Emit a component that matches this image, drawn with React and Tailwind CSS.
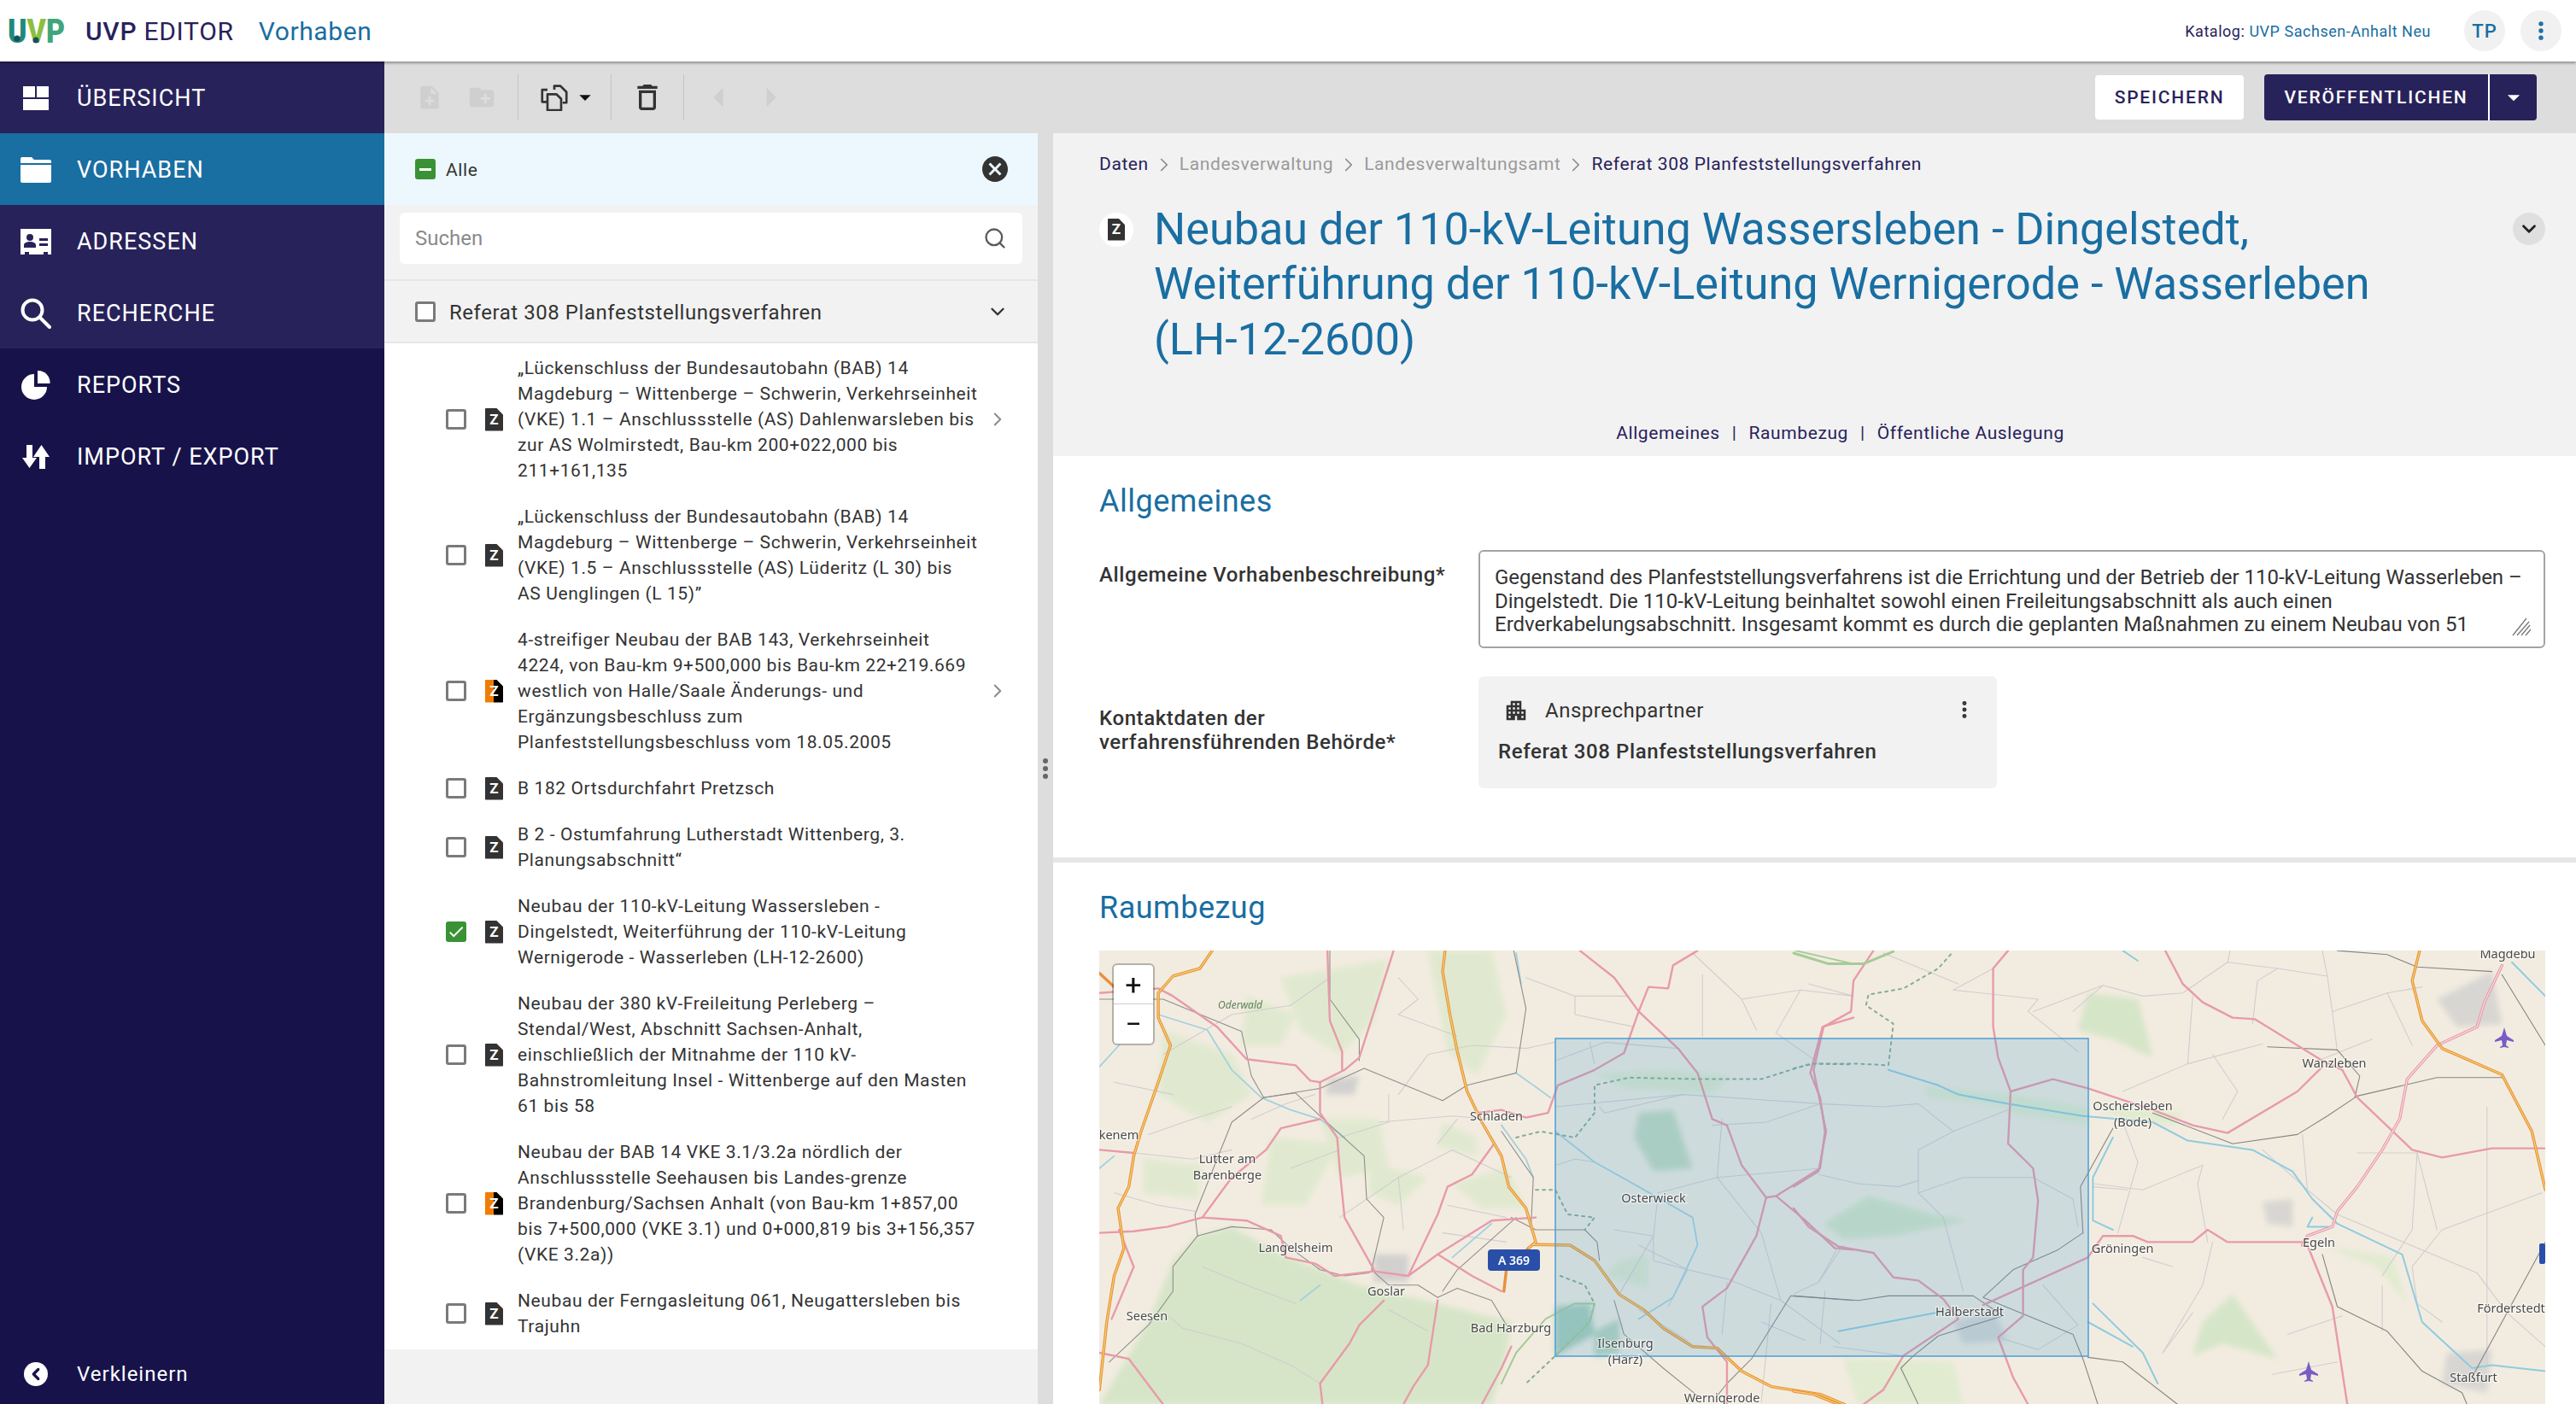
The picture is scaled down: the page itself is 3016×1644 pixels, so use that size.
import { ChevronRight, ChevronDown, Search, EllipsisVertical } from 'lucide-react';
import { MdCancel, MdApartment, MdDeleteOutline, MdArrowDropDown, MdArrowLeft, MdArrowRight, MdNoteAdd, MdCreateNewFolder, MdCheck } from 'react-icons/md';

const FONT = "font-['Roboto','Liberation_Sans',sans-serif]";

const NAV = [
  { label: 'ÜBERSICHT', icon: DashIcon },
  { label: 'VORHABEN', icon: FolderIcon, active: true },
  { label: 'ADRESSEN', icon: CardIcon },
  { label: 'RECHERCHE', icon: SearchIcon },
];
const NAV_LOWER = [
  { label: 'REPORTS', icon: PieIcon },
  { label: 'IMPORT / EXPORT', icon: SwapIcon },
];

const TREE = [
  { lines: ['„Lückenschluss der Bundesautobahn (BAB) 14', 'Magdeburg – Wittenberge – Schwerin, Verkehrseinheit', '(VKE) 1.1 – Anschlussstelle (AS) Dahlenwarsleben bis', 'zur AS Wolmirstedt, Bau-km 200+022,000 bis', '211+161,135'], chevron: true },
  { lines: ['„Lückenschluss der Bundesautobahn (BAB) 14', 'Magdeburg – Wittenberge – Schwerin, Verkehrseinheit', '(VKE) 1.5 – Anschlussstelle (AS) Lüderitz (L 30) bis', 'AS Uenglingen (L 15)”'] },
  { lines: ['4-streifiger Neubau der BAB 143, Verkehrseinheit', '4224, von Bau-km 9+500,000 bis Bau-km 22+219.669', 'westlich von Halle/Saale Änderungs- und', 'Ergänzungsbeschluss zum', 'Planfeststellungsbeschluss vom 18.05.2005'], orange: true, chevron: true },
  { lines: ['B 182 Ortsdurchfahrt Pretzsch'] },
  { lines: ['B 2 - Ostumfahrung Lutherstadt Wittenberg, 3.', 'Planungsabschnitt“'] },
  { lines: ['Neubau der 110-kV-Leitung Wassersleben -', 'Dingelstedt, Weiterführung der 110-kV-Leitung', 'Wernigerode - Wasserleben (LH-12-2600)'], checked: true },
  { lines: ['Neubau der 380 kV-Freileitung Perleberg –', 'Stendal/West, Abschnitt Sachsen-Anhalt,', 'einschließlich der Mitnahme der 110 kV-', 'Bahnstromleitung Insel - Wittenberge auf den Masten', '61 bis 58'] },
  { lines: ['Neubau der BAB 14 VKE 3.1/3.2a nördlich der', 'Anschlussstelle Seehausen bis Landes-grenze', 'Brandenburg/Sachsen Anhalt (von Bau-km 1+857,00', 'bis 7+500,000 (VKE 3.1) und 0+000,819 bis 3+156,357', '(VKE 3.2a))'], orange: true },
  { lines: ['Neubau der Ferngasleitung 061, Neugattersleben bis', 'Trajuhn'] },
];

function DashIcon() {
  return (
    <svg width="32" height="28" viewBox="0 0 32 28" fill="currentColor" className="ml-[1px]">
      <rect x="0" y="0" width="14" height="13" />
      <rect x="16" y="0" width="14" height="13" />
      <rect x="0" y="15" width="30" height="13" />
    </svg>
  );
}

function FolderIcon() {
  return (
    <svg width="36" height="30" viewBox="0 0 36 30" fill="currentColor" className="-ml-[2px]">
      <path d="M0 2a2 2 0 0 1 2-2h11l3 3h18a2 2 0 0 1 2 2v2H0z" />
      <path d="M0 9h36v19a2 2 0 0 1-2 2H2a2 2 0 0 1-2-2z" />
    </svg>
  );
}

function CardIcon() {
  return (
    <svg width="36" height="30" viewBox="0 0 36 30" fill="currentColor" className="-ml-[2px]">
      <path fillRule="evenodd" d="M0 0h36v30h-4v-3h-5v3H10v-3H5v3H0zM11 6a4 4 0 1 0 0 8 4 4 0 0 0 0-8zM4 22h14v-3c0-3-4-4-7-4s-7 1-7 4zM22 11h10v3H22zM22 17h10v3H22z" />
    </svg>
  );
}

function SearchIcon() {
  return (
    <svg width="36" height="36" viewBox="0 0 36 36" fill="none" stroke="currentColor" strokeWidth="4" className="-ml-[2px]">
      <circle cx="14" cy="14" r="11.5" />
      <path d="M22.5 22.5 34 34" strokeLinecap="round" />
    </svg>
  );
}

function PieIcon() {
  return (
    <svg width="34" height="34" viewBox="0 0 34 34" fill="currentColor" className="-ml-[1px]">
      <path d="M15 4A15 15 0 1 0 30 19H15Z" />
      <path d="M19 0A14 14 0 0 1 33.500 15H19Z" />
    </svg>
  );
}

function SwapIcon() {
  return (
    <svg width="32" height="28" viewBox="0 0 32 28" fill="currentColor">
      <path d="M5 0h7v15h5L8.500 27 0 15h5z" />
      <path d="M20 28V14h-7L22.500 0 32 14h-5v14z" />
    </svg>
  );
}

function ZDoc({ orange, size = 'h-[27px] w-[21px]' }) {
  return (
    <span className={`relative inline-flex shrink-0 items-center justify-center text-[17px] font-bold leading-none text-white ${size} ${orange ? 'bg-[linear-gradient(90deg,#f07d00_50%,#000_50%)]' : 'bg-[#333333]'} [clip-path:polygon(0_0,62%_0,100%_30%,100%_100%,0_100%)] rounded-[1px]`}>
      Z
    </span>
  );
}

function Box({ checked, minus }) {
  if (minus) return <span className="flex h-[24px] w-[24px] shrink-0 items-center justify-center rounded-[3px] bg-[#3a9234]"><span className="h-[3px] w-[14px] bg-white" /></span>;
  if (checked) return <span className="flex h-[24px] w-[24px] shrink-0 items-center justify-center rounded-[3px] bg-[#3a9234] text-white"><MdCheck size={22} /></span>;
  return <span className="h-[24px] w-[24px] shrink-0 rounded-[3px] border-[3px] border-[#7a7a7a] bg-white" />;
}

function TreeRow({ row }) {
  return (
    <div className="flex items-center py-3 pl-[72px] pr-[34px]">
      <Box checked={row.checked} />
      <span className="ml-[22px] mr-[17px]"><ZDoc orange={row.orange} /></span>
      <div className="flex-1 text-[21px] leading-[30px] tracking-[0.6px] text-[#333333]">
        {row.lines.map((l) => <div key={l} className="whitespace-nowrap">{l}</div>)}
      </div>
      {row.chevron && <ChevronRight size={26} strokeWidth={1.8} className="text-[#8a8a8a]" />}
    </div>
  );
}

// roads traced off the two halves of the map
const PINK_W = [
  '30,230 150,215 180,240 270,340 330,445 430,465 460,515 480,520 480,620 515,700 520,800 530,960 590,1130',
  '480,520 530,480 560,440 630,92', '495,92 500,320 525,420 525,480', '480,640 400,670 370,740 300,830 240,960',
  '240,960 330,970 400,1020 410,1090 470,1110 510,1150 590,1135 660,1150 720,1080 790,1150 850,1200',
  '30,1010 100,1005 170,990 240,960', '660,1150 720,950 740,860 790,820 835,720', '720,1080 830,970 920,960', '30,740 100,750',
  '800,620 850,610 900,635 945,620 965,530 1040,480 1100,425 1130,290 1150,210 1190,215 1200,140 1250,92',
  '1010,92 1080,180 1130,290 1210,410 1250,490 1280,640 1310,660 1340,790 1390,895 1410,890 1500,800 1510,680 1500,570 1480,490 1505,340 1568,310',
  '1390,895 1370,1020 1310,1190 1260,1250 1270,1350 1310,1430 1310,1568', '1410,890 1470,970 1530,1060 1568,1065',
  '720,1230 700,1440 670,1510 650,1568', '610,1230 560,1310 540,1370 480,1500 485,1568', '870,1380 850,1450 810,1568', '55,1290 100,1120 70,1000', '30,1400 90,1420 160,1568',
];
const RAIL_W = [
  '30,250 160,250 320,355 340,500 365,570 480,540 570,475 730,580 780,530 880,490 900,280 875,92',
  '365,570 430,555 480,630 570,760 575,900 610,960 585,1130 620,1180 680,1180 720,1220 760,1190 830,1230 860,1310',
  '230,1020 300,990 380,1000 420,1060 480,1130 530,1150 580,1140', '230,1020 180,1120 180,1200 130,1310 50,1430',
  '230,1020 225,950 300,650 365,570', '870,960 920,1000 1020,1000 1045,1040 1050,1100', '880,960 760,1130 730,1200', '910,1000 915,830 850,680',
  '1440,1215 1568,1230', '1440,1215 1360,1420 1310,1500 1290,1540', '1080,1230 1100,1340 1180,1450 1250,1540', '500,92 500,250 560,380 560,450',
];
const WATER_W = [
  '150,300 250,350 300,480 360,570 420,610 480,640 530,700', '880,100 890,200', '880,490 950,570', '850,660 900,770 915,830',
  '960,680 1040,780 1130,860 1240,960 1250,1050 1200,1220 1130,1290', '830,980 750,1090', '480,1180 440,1230', '30,800 60,760', '30,470 70,400',
];
const MINOR_W = [
  '100,750 220,770 300,740', '600,650 750,630 830,640', '640,560 700,430 790,400 900,410 960,390', '520,700 620,650 620,560', '900,180 1000,240 1110,240',
  '1000,240 1000,300 1120,340', '640,300 760,370', '960,600 1220,560 1500,590', '1220,560 1060,620 1050,600', '1280,660 1390,650 1500,590', '1040,780 1000,770 960,790',
  '1130,1050 1230,1130 1310,1160 1420,1230 1540,1370', '1090,1210 1160,1020 1170,880', '1290,830 1170,880', '1290,830 1380,1010 1420,1230', '1290,830 1300,640', '1290,830 1500,800',
  '740,920 860,960', '520,960 640,830 750,740 870,830', '420,800 520,740', '170,1280 200,1320 320,1370 420,1440 480,1500', '60,880 150,920 225,940',
  '1080,1000 1160,1020 1160,1100 1230,1130', '1230,1130 1190,1250', '1400,1240 1380,1560', '1510,1200 1500,1370', '1240,100 1340,250 1460,220 1568,240', '1260,170 1260,370', '1340,250 1370,350', '1460,220 1410,360 1500,460',
  '160,430 300,300 420,270 500,180', '340,640 410,590 470,560', '640,180 680,250 640,300', '720,720 760,640', '650,1000 640,830', '730,1010 860,1040', '130,690 220,640 300,600', '60,520 180,560',
  '240,1120 330,1180 430,1240', '620,1260 700,1330', '960,450 1060,390 1210,410', '1030,390 1040,460', '1310,1170 1300,1340', '1130,1260 1230,1360', '1380,1300 1470,1360',
];

function Lines({ list, ...rest }) {
  return list.map((p) => <polyline key={p} points={p} fill="none" strokeLinejoin="round" strokeLinecap="round" vectorEffect="non-scaling-stroke" {...rest} />);
}

const PINK_E = [
  '745,92 780,200 820,260 880,310 925,315 1060,450 1100,480 1130,570 1240,740 1300,765 1400,735 1507,735',
  '1060,470 1010,550 870,685 800,660 720,610 590,540 520,510 435,550 410,440 400,340 400,150 430,92',
  '435,550 430,720 480,800 490,905 480,1090 460,1130 460,1280 410,1350 440,1480 470,1568',
  '160,92 120,190 115,290 60,340 40,480 65,680 50,810 0,860',
  '0,930 30,990 90,1055 160,1075 200,1155 250,1165 300,1225 330,1290 220,1410 180,1520 140,1568',
  '380,1245 590,1090', '590,1090 620,1020 680,1020 710,1040 800,1040 830,1000 870,1040 1020,1040', '1030,1050 1080,1250 1110,1568',
];
const DOUBLE_E = ['1420,140 1385,260 1370,340 1290,400 1230,510 1215,640 1180,740 1130,860 1090,940 1080,990 1030,1020 1020,1050'];
const RAIL_E = [
  '1090,92 1190,105 1250,145 1400,160', '1420,170 1507,400', '1420,505 1290,505 1130,565 1070,630 1010,690 880,720 720,620',
  '580,1010 575,860 640,670', '580,1010 530,1065 440,1130 380,1220 560,1340 580,1420 610,1568',
  '0,1215 130,1230 190,1215 360,1215 420,1280 290,1345 240,1410 215,1450 250,1568', '590,1415 660,1430 770,1568',
  '1060,1080 1090,1250 1190,1330 1260,1460 1340,1530 1350,1568', '1360,1480 1507,1040', '950,405 1090,415 1135,500 1125,570',
];
const WATER_E = [
  '190,480 290,530 330,560 430,590 580,630 720,650 790,710 920,740 1000,810 1040,900 1090,980', '640,700 600,830 600,970 640,1000', '600,1240 700,1400 730,1500', '590,1300 680,1380',
  '1090,980 1220,1080 1260,1300 1360,1450 1400,1440 1507,1460', '90,1330 300,1265', '1440,130 1507,240', '660,92 690,125', '1040,960 1030,990 1080,990',
];
const MINOR_E = [
  '620,205 700,240 780,230 870,130 970,150 1070,175 1060,92', '480,290 620,205 560,290', '970,150 930,190 920,330', '870,130 875,92', '800,240 790,460 940,395', '840,430 890,550 860,640',
  '660,550 790,460', '1070,175 1080,290 1190,230 1260,210', '1080,290 1090,420', '1190,230 1240,400', '1160,380 1020,470', '660,650 690,780 650,1010', '820,790 700,870 600,850', '820,790 810,850 830,1040',
  '940,740 1030,870 1020,690', '1030,870 1090,950 1370,1140', '1370,1140 1430,1270 1507,1380', '1300,1000 1240,1120 1250,1240 1300,1300', '1300,1000 1500,880', '1390,600 1390,1440', '840,1040 820,1180 740,1400',
  '960,1470 1090,1430', '320,220 490,250 470,290 570,420', '320,220 400,150', '50,590 180,600 250,590 320,680 430,610', '320,680 250,740 250,880 340,830 480,830', '250,880 300,960 340,1200', '130,850 50,820', '130,850 210,860 250,840',
  '0,1210 50,1170 90,1055', '500,1180 570,1310', '80,1380 220,1410', '410,1350 490,1390 570,1310', '600,860 670,870',
  '1130,750 1250,750 1240,1000 1180,1150', '1250,750 1290,1000', '990,1340 1100,1280', '800,1270 740,1400', '700,1090 760,1120', '1180,1330 1180,1180', '180,100 330,200', '30,200 120,240', '480,830 560,900 570,990', '100,1050 50,1170',
];

const LABELS = [
  ['Schladen', 1752, 1312], ['Lutter am', 1437, 1362], ['Barenberge', 1437, 1381], ['Langelsheim', 1517, 1466], ['Goslar', 1623, 1517],
  ['Seesen', 1343, 1546], ['Bad Harzburg', 1769, 1560], ['Ilsenburg', 1903, 1578], ['(Harz)', 1903, 1597], ['Osterwieck', 1936, 1408], ['Wernigerode', 2016, 1642],
  ['Halberstadt', 2306, 1541], ['Oschersleben', 2497, 1300], ['(Bode)', 2497, 1319], ['Gröningen', 2485, 1467], ['Egeln', 2715, 1460], ['Wanzleben', 2733, 1250],
  ['Förderstedt', 2940, 1537], ['Staßfurt', 2896, 1618], ['Magdebu', 2936, 1122], ['kenem', 1310, 1334],
];

const PLANE = 'l3,10 l8,5 v2 l-8,-2 l-1,6 l3,2 v1 l-5,-1 l-5,1 v-1 l3,-2 l-1,-6 l-8,2 v-2 l8,-5z';

function MapArt() {
  return (
    <svg className="block h-full w-full" viewBox="0 0 1693 531" preserveAspectRatio="none">
      <defs>
        <filter id="patch"><feGaussianBlur stdDeviation="3" /></filter>
        <filter id="soft" x="0" y="0" width="100%" height="100%" filterUnits="userSpaceOnUse"><feGaussianBlur stdDeviation="0.45" /></filter>
      </defs>
      <rect width="1693" height="531" fill="#f2ece0" />
      {/* Wald und Siedlung */}
      <g filter="url(#patch)">
        <g transform="translate(-17,-33) scale(0.574,0.36)">
          <path d="M180,1100 230,1020 300,990 400,1080 560,1180 720,1240 870,1300 860,1400 830,1568 30,1568 130,1300Z" fill="#d6e5c7" />
          <path d="M700,92 830,92 860,300 800,500 740,420Z M400,180 620,120 590,320 520,430 440,350Z M160,350 300,430 340,560 250,650 150,560Z M480,640 600,640 620,800 520,830Z M380,700 520,720 450,920 360,920Z M730,650 800,700 800,760 720,730Z M750,850 860,800 900,930 810,930Z M580,780 700,830 640,920 580,880Z M120,770 240,790 230,900 120,880Z M330,240 430,300 400,400 320,400Z M1040,490 1200,480 1320,500 1280,560 1100,540Z M1090,1100 1150,1080 1150,1190 1060,1150Z" fill="#e0e9cf" />
          <path d="M1130,620 1200,610 1240,800 1160,810 1120,700Z" fill="#c5dac0" />
          <path d="M960,1250 1030,1240 1040,1340 960,1410Z" fill="#aacdb8" />
          <path d="M1040,1330 1090,1290 1090,1400 1040,1413Z" fill="#b9d4bd" />
          <path d="M500,510 560,500 550,560 490,560Z M590,1080 660,1080 660,1170 590,1170Z" fill="#d2d0cf" />
        </g>
        <g transform="translate(813,-33) scale(0.584,0.36)">
          <path d="M590,230 690,250 720,440 640,380 570,350Z M820,1300 880,1210 940,1350 970,1420 860,1370 800,1410Z M60,980 150,890 280,950 350,970 200,1020 100,1030Z" fill="#d5e5c7" />
          <path d="M430,560 590,600 590,660 430,620Z M260,530 430,560 430,600 270,570Z M600,590 780,620 760,660 660,640Z M1060,1050 1200,1090 1230,1240 1170,1120Z M100,1420 320,1430 340,1568 130,1568Z" fill="#e0ebcf" />
          <path d="M1290,250 1400,160 1420,330 1330,340Z M320,1300 400,1260 430,1360 340,1370Z M1310,1400 1400,1390 1390,1530 1300,1500Z M940,910 1000,900 1000,990 950,980Z" fill="#d8d6d3" />
        </g>
      </g>
      {/* Strassen, Bahn, Wasser */}
      <g filter="url(#soft)">
        <g transform="translate(-17,-33) scale(0.574,0.36)">
          <Lines list={MINOR_W} stroke="#cfcdd0" strokeWidth="1.1" />
          <Lines list={WATER_W} stroke="#a4d0e0" strokeWidth="1.8" />
          <Lines list={RAIL_W} stroke="#8e8e8c" strokeWidth="1.1" />
          <Lines list={PINK_W} stroke="#e89aaa" strokeWidth="2.4" />
          <Lines list={['260,92 235,150 180,175 150,230 150,310 175,400 150,520 115,680 100,760 90,860 68,930 80,1060 60,1150 45,1300 30,1520', '735,92 730,160 745,300 760,420 780,550 810,650 850,760 865,860 900,930 920,1040 905,1060', '915,1048 990,1050 1040,1100 1090,1210 1140,1260 1180,1320 1240,1380 1290,1385 1340,1460 1400,1510 1500,1535 1550,1568', '905,1060 860,1130 855,1200', '30,165 60,210']} stroke="#e8903c" strokeWidth="3.4" />
          <Lines list={['260,92 235,150 180,175 150,230 150,310 175,400 150,520 115,680 100,760 90,860 68,930 80,1060 60,1150 45,1300 30,1520', '735,92 730,160 745,300 760,420 780,550 810,650 850,760 865,860 900,930 920,1040 905,1060', '915,1048 990,1050 1040,1100 1090,1210 1140,1260 1180,1320 1240,1380 1290,1385 1340,1460 1400,1510 1500,1535 1550,1568']} stroke="#f4cf6a" strokeWidth="1.3" />
          <Lines list={['1040,610 1040,530 1110,505 1250,510 1380,510 1480,460 1568,462', '880,700 930,680 1000,700 1040,620', '920,870 960,870 985,950 1040,960 1020,1000', '970,1150 1020,1180 1040,1240 1030,1300 960,1410 900,1500']} stroke="#86ad94" strokeWidth="2" strokeDasharray="3 5" />
          <Lines list={['960,1410 1030,1300 1040,1240 1000,1240 940,1290 880,1400 850,1500', '1450,92 1568,135']} stroke="#a5cb98" strokeWidth="2" />
        </g>
        <g transform="translate(813,-33) scale(0.584,0.36)">
          <Lines list={MINOR_E} stroke="#cfcdd0" strokeWidth="1.1" />
          <Lines list={WATER_E} stroke="#8fcbe0" strokeWidth="2" />
          <Lines list={RAIL_E} stroke="#858583" strokeWidth="1.1" />
          <Lines list={PINK_E} stroke="#e89aaa" strokeWidth="2.4" />
          <Lines list={DOUBLE_E} stroke="#e89aaa" strokeWidth="3.4" />
          <Lines list={DOUBLE_E} stroke="#f8dde2" strokeWidth="1.2" />
          <Lines list={['0,1525 40,1535 90,1568', '1255,92 1240,190 1260,320 1300,410 1420,495 1480,680 1507,870']} stroke="#e8903c" strokeWidth="3.4" />
          <Lines list={['0,1525 40,1535 90,1568', '1255,92 1240,190 1260,320 1300,410 1420,495 1480,680 1507,870']} stroke="#f4cf6a" strokeWidth="1.3" />
          <Lines list={['0,475 40,460 130,460 190,465 200,330 145,270 150,235 220,215 290,150 320,95']} stroke="#86ad94" strokeWidth="2" strokeDasharray="3 5" />
          <Lines list={['0,100 70,135 140,135 200,95']} stroke="#a5cb98" strokeWidth="3" />
        </g>
      </g>
      {/* Raumbezug */}
      <rect x="534" y="103" width="624" height="372" fill="#439cd1" fillOpacity="0.2" stroke="#4a9fd8" strokeWidth="1.5" />
      <rect x="455" y="350" width="61" height="25" rx="4" fill="#2a4fa8" />
      <text x="485.500" y="368" textAnchor="middle" fontFamily="Noto Sans" fontWeight="600" fontSize="14" fill="#fff">A 369</text>
      <rect x="1686" y="343" width="7" height="24" rx="2" fill="#2a4fa8" />
      <path d={`M1645,90 ${PLANE}`} fill="#7a5cc4" />
      <path d={`M1416,481 ${PLANE}`} fill="#7a5cc4" />
      {LABELS.map(([t, x, y]) => (
        <text key={t} x={x - 1287} y={y - 1113} textAnchor="middle" fontFamily="Noto Sans" fontSize="14.500" fill="#4a4a4a" stroke="#ffffff" strokeOpacity="0.55" strokeWidth="2.500" paintOrder="stroke">{t}</text>
      ))}
      <text x="165" y="68" textAnchor="middle" fontFamily="Noto Sans" fontStyle="italic" fontSize="12" fill="#5f7f5a">Oderwald</text>
    </svg>
  );
}

function LogoMark() {
  return (
    <svg width="68" height="40" viewBox="0 0 68 40" className="shrink-0 overflow-visible">
      <text x="0" y="34" fontFamily="Roboto" fontWeight="900" fontSize="38" textLength="67" lengthAdjust="spacingAndGlyphs">
        <tspan fill="#1f8a7c">U</tspan><tspan fill="#8cbf3f">V</tspan><tspan fill="#3fa67a">P</tspan>
      </text>
      <circle cx="11" cy="29" r="3.500" fill="#174f5c" />
      <circle cx="33" cy="31" r="3.500" fill="#174f5c" />
    </svg>
  );
}

export default function App() {
  return (
    <div className={`flex h-[1644px] w-[3016px] flex-col overflow-hidden bg-white ${FONT}`}>
      <header className="relative z-10 flex h-[72px] shrink-0 items-center bg-white pl-[9px] pr-[17px] shadow-[0_2px_3px_rgba(0,0,0,0.35)]">
        <LogoMark />
        <span className="ml-[23px] text-[30px] tracking-[0.7px] text-[#28225b]"><b className="font-medium">UVP</b> EDITOR</span>
        <span className="ml-[29px] text-[30px] tracking-[0.6px] text-[#196ea2]">Vorhaben</span>
        <span className="ml-auto text-[18px] tracking-[0.53px] text-[#28225b]">Katalog: <span className="text-[#196ea2]">UVP Sachsen-Anhalt Neu</span></span>
        <span className="ml-[39px] flex h-[48px] w-[48px] items-center justify-center rounded-full bg-[#f1f1f1] text-[22px] font-medium tracking-[1px] text-[#196ea2]">TP</span>
        <span className="ml-[18px] flex h-[48px] w-[48px] items-center justify-center rounded-full bg-[#f1f1f1] text-[#196ea2]"><EllipsisVertical size={28} strokeWidth={2.6} /></span>
      </header>

      <div className="flex min-h-0 flex-1">
        <aside className="flex w-[450px] shrink-0 flex-col bg-[#17134a] text-white">
          <div className="bg-[#28225b]">
            {NAV.map(({ label, icon: Icon, active }) => (
              <div key={label} className={`flex h-[84px] items-center pl-[26px] pt-[2px] text-[27px] tracking-[1px] ${active ? 'bg-[#196ea2]' : ''}`}>
                <span className="flex w-[64px] items-center"><Icon /></span>
                {label}
              </div>
            ))}
          </div>
          {NAV_LOWER.map(({ label, icon: Icon }) => (
            <div key={label} className="flex h-[84px] items-center pl-[26px] pt-[2px] text-[27px] tracking-[1px]">
              <span className="flex w-[64px] items-center"><Icon /></span>
              {label}
            </div>
          ))}
          <div className="mt-auto flex h-[70px] items-center pl-[28px] text-[24px] tracking-[1px]">
            <span className="mr-[34px] flex h-[28px] w-[28px] items-center justify-center rounded-full bg-white text-[#17134a]"><ChevronRight size={22} strokeWidth={3.5} className="rotate-180" /></span>
            Verkleinern
          </div>
        </aside>

        <div className="flex min-w-0 flex-1 flex-col">
          <div className="flex h-[84px] shrink-0 items-center bg-[#dddddd] pr-[46px]">
            <div className="flex w-[156px] items-center gap-[28px] pl-[37px] text-[#cfcfcf]">
              <MdNoteAdd size={32} />
              <MdCreateNewFolder size={34} />
            </div>
            <span className="h-[54px] w-px bg-[#c4c4c4]" />
            <div className="flex w-[108px] items-center pl-[25px] text-[#333333]">
              <svg width="34" height="32" viewBox="0 0 38 36" fill="none" stroke="currentColor" strokeWidth="3" strokeLinejoin="round">
                <path d="M9 24H3V8h7M19 8V3h8l8 8v14h-5" />
                <path d="M10 14h12l6 6v15H10z" />
              </svg>
              <MdArrowDropDown size={32} className="ml-[3px] text-[#111111]" />
            </div>
            <span className="h-[54px] w-px bg-[#c4c4c4]" />
            <div className="flex w-[84px] items-center justify-center text-[#333333]"><MdDeleteOutline size={40} /></div>
            <span className="h-[54px] w-px bg-[#c4c4c4]" />
            <div className="ml-[14px] flex items-center gap-[6px] text-[#cfcfcf]">
              <MdArrowLeft size={54} />
              <MdArrowRight size={54} />
            </div>
            <button className="ml-auto h-[52px] w-[174px] rounded-[4px] bg-white pt-[2px] text-[21px] font-medium tracking-[1.8px] text-[#28225b]">SPEICHERN</button>
            <div className="ml-[24px] flex h-[54px] w-[319px] items-center rounded-[4px] bg-[#28225b] text-white">
              <span className="flex h-full w-[264px] items-center justify-center border-r-2 border-white pt-[2px] text-[21px] font-medium tracking-[1.8px]">VERÖFFENTLICHEN</span>
              <span className="flex flex-1 items-center justify-center"><MdArrowDropDown size={34} /></span>
            </div>
          </div>

          <div className="flex min-h-0 flex-1">
            {/* Baum */}
            <section className="flex w-[765px] shrink-0 flex-col bg-[#f2f2f2]">
              <div className="flex h-[84px] shrink-0 items-center bg-[#ecf8fe] pl-[36px] pr-[32px]">
                <Box minus />
                <span className="ml-[12px] pt-[3px] text-[21px] tracking-[0.6px] text-[#333333]">Alle</span>
                <MdCancel size={36} className="ml-auto text-[#333333]" />
              </div>
              <div className="flex h-[89px] shrink-0 items-start border-b-2 border-[#e6e6e6] px-[18px] pt-[9px]">
                <div className="flex h-[60px] w-full items-center justify-between rounded-[6px] bg-white pl-[18px] pr-[20px] text-[24px] text-[#8a8a8a]">
                  Suchen
                  <Search size={28} strokeWidth={2} className="-mr-[2px] text-[#5a5a5a]" />
                </div>
              </div>
              <div className="flex h-[73px] shrink-0 items-center border-b-2 border-[#e6e6e6] pl-[36px] pr-[34px]">
                <Box />
                <span className="ml-[16px] pt-[3px] text-[24px] tracking-[0.55px] text-[#333333]">Referat 308 Planfeststellungsverfahren</span>
                <ChevronDown size={26} strokeWidth={2.2} className="ml-auto text-[#333333]" />
              </div>
              <div className="shrink-0 bg-white pt-[2px]">
                {TREE.map((row, i) => <TreeRow key={i} row={row} />)}
              </div>
            </section>

            {/* Griff */}
            <div className="flex w-[18px] shrink-0 flex-col items-center justify-center gap-[3px] bg-[#dddddd]">
              <span className="h-[6px] w-[6px] rounded-full bg-[#666666]" />
              <span className="h-[6px] w-[6px] rounded-full bg-[#666666]" />
              <span className="h-[6px] w-[6px] rounded-full bg-[#666666]" />
            </div>

            {/* Formular */}
            <main className="min-w-0 flex-1 overflow-hidden bg-white">
              <div className="relative h-[378px] bg-[#f2f2f2] pl-[54px] pr-[36px] pt-[21px]">
                <div className="flex items-center text-[21px] tracking-[0.6px] text-[#28225b]">
                  Daten
                  <ChevronRight size={26} strokeWidth={1.6} className="mx-[5px] text-[#8a8a8a]" />
                  <span className="text-[#9a9a9a]">Landesverwaltung</span>
                  <ChevronRight size={26} strokeWidth={1.6} className="mx-[5px] text-[#8a8a8a]" />
                  <span className="text-[#9a9a9a]">Landesverwaltungsamt</span>
                  <ChevronRight size={26} strokeWidth={1.6} className="mx-[5px] text-[#8a8a8a]" />
                  Referat 308 Planfeststellungsverfahren
                </div>
                <div className="mt-[28px] flex items-start">
                  <span className="mt-[12px] flex h-[40px] w-[40px] shrink-0 items-center justify-center rounded-full bg-white"><ZDoc size="h-[26px] w-[20px]" /></span>
                  <h1 className="ml-[24px] text-[52.2px] font-normal leading-[64.5px] text-[#196ea2]">
                    Neubau der 110-kV-Leitung Wassersleben - Dingelstedt,<br />
                    Weiterführung der 110-kV-Leitung Wernigerode - Wasserleben<br />
                    (LH-12-2600)
                  </h1>
                  <span className="ml-auto mt-[12px] flex h-[38px] w-[38px] shrink-0 items-center justify-center rounded-full bg-[#dfdfdf]"><ChevronDown size={26} strokeWidth={2.6} className="text-[#222222]" /></span>
                </div>
                <div className="absolute bottom-[11px] left-0 right-0 flex justify-center pl-[60px] text-[21px] tracking-[0.6px] text-[#28225b]">
                  Allgemeines<span className="mx-[14px]">|</span>Raumbezug<span className="mx-[14px]">|</span>Öffentliche Auslegung
                </div>
              </div>

              <section className="h-[476px] border-b-[6px] border-[#e6e6e6] pl-[54px] pr-[36px] pt-[30px]">
                <h2 className="text-[36px] font-normal leading-[46px] tracking-[0.5px] text-[#196ea2]">Allgemeines</h2>
                <div className="mt-[34px] flex items-start">
                  <label className="mt-[15px] w-[444px] shrink-0 text-[24px] font-medium leading-[28px] tracking-[0.6px] text-[#333333]">Allgemeine Vorhabenbeschreibung*</label>
                  <div className="relative h-[115px] flex-1 rounded-[6px] border-2 border-[#a3a3a3] py-[17px] pl-[17px] text-[24px] leading-[27.5px] text-[#333333]">
                    <div className="whitespace-nowrap">Gegenstand des Planfeststellungsverfahrens ist die Errichtung und der Betrieb der 110-kV-Leitung Wasserleben –</div>
                    <div className="whitespace-nowrap">Dingelstedt. Die 110-kV-Leitung beinhaltet sowohl einen Freileitungsabschnitt als auch einen</div>
                    <div className="whitespace-nowrap">Erdverkabelungsabschnitt. Insgesamt kommt es durch die geplanten Maßnahmen zu einem Neubau von 51</div>
                    <svg className="absolute bottom-[12px] right-[14px]" width="24" height="22" viewBox="0 0 24 22" stroke="#777777" strokeWidth="1.3"><path d="M2 21 18 1M7 21 21 5M12 21 22 9M17 21 23 14" /></svg>
                  </div>
                </div>
                <div className="mt-[33px] flex items-start">
                  <label className="mt-[35px] w-[444px] shrink-0 text-[24px] font-medium leading-[28px] tracking-[0.6px] text-[#333333]">Kontaktdaten der<br />verfahrensführenden Behörde*</label>
                  <div className="relative h-[131px] w-[607px] rounded-[6px] bg-[#f2f2f2] px-[23px] pt-[19px]">
                    <div className="flex items-center text-[#333333]">
                      <span className="flex h-[42px] w-[42px] items-center justify-center"><MdApartment size={30} /></span>
                      <span className="ml-[13px] text-[24px] tracking-[0.5px]">Ansprechpartner</span>
                    </div>
                    <EllipsisVertical size={26} strokeWidth={2.6} className="absolute right-[25px] top-[26px] text-[#333333]" />
                    <div className="mt-[9px] text-[24px] font-medium tracking-[0.6px] text-[#333333]">Referat 308 Planfeststellungsverfahren</div>
                  </div>
                </div>
              </section>

              <section className="pl-[54px] pr-[36px] pt-[30px]">
                <h2 className="text-[36px] font-normal leading-[46px] tracking-[0.5px] text-[#196ea2]">Raumbezug</h2>
                <div className="relative mt-[27px] h-[531px] w-[1693px] overflow-hidden">
                  <MapArt />
                  <div className="absolute left-[17px] top-[17px] w-[46px] rounded-[4px] bg-white text-center text-[#111111] shadow-[0_0_0_2px_rgba(0,0,0,0.25)]">
                    <div className="flex h-[46px] items-center justify-center border-b border-[#cccccc] text-[34px] leading-none">+</div>
                    <div className="flex h-[46px] items-center justify-center text-[34px] leading-none">−</div>
                  </div>
                </div>
              </section>
            </main>
          </div>
        </div>
      </div>
    </div>
  );
}
